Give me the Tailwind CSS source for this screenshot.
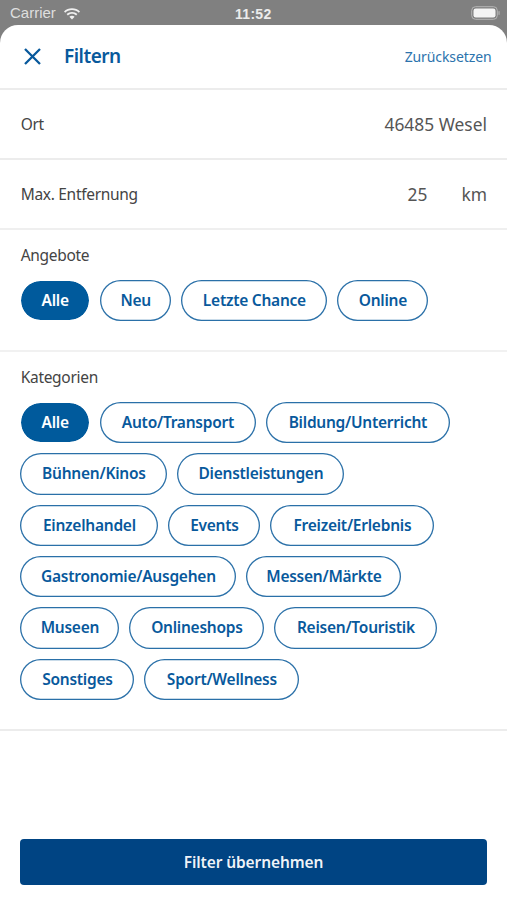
<!DOCTYPE html>
<html lang="de">
<head>
<meta charset="utf-8">
<script src="https://cdn.jsdelivr.net/npm/@tailwindcss/browser@4"></script>
</head>
<body class="m-0 bg-[#808080] font-['Noto_Sans',sans-serif]">
<div class="relative w-[507px] h-[900px] overflow-hidden flex flex-col">
  <div class="h-[25px] shrink-0 flex items-center justify-between pl-[10px] pr-[6px] font-['Liberation_Sans',sans-serif] relative">
    <div class="flex items-center gap-[7px] text-[15px] text-white/75 mt-[2px]"><span>Carrier</span>
      <svg width="18" height="14" viewBox="0 0 18 13" fill="#f0f0f0"><path d="M9 2.600c2.600 0 5 1 6.800 2.700l1.200-1.300C14.900 2 12.100.8 9 .8S3.100 2 1 4l1.200 1.300C4 3.600 6.400 2.600 9 2.600z"/><path d="M9 6.300c1.600 0 3 .6 4.100 1.600l1.300-1.300C13 5.200 11.100 4.500 9 4.500s-4 .7-5.400 2.100l1.300 1.300C6 6.900 7.400 6.300 9 6.300z"/><path d="M9 8.200c-1 0-1.900.4-2.600 1L9 12l2.600-2.800c-.7-.6-1.600-1-2.600-1z"/></svg>
    </div>
    <span class="absolute left-[235px] top-[4px] text-[14px] font-bold text-white/85 tracking-[0.3px]">11:52</span>
    <svg class="mt-[1px]" width="30" height="14" viewBox="0 0 30 14"><rect x="0.700" y="0.700" width="25.600" height="12.600" rx="3.800" fill="none" stroke="#b5b5b5" stroke-width="1"/><rect x="2.500" y="2.500" width="22" height="9" rx="2.300" fill="#f4f4f4"/><rect x="27.300" y="5" width="1.500" height="4" rx="0.700" fill="#a8a8a8"/></svg>
  </div>
  <div class="flex-1 bg-white rounded-t-[18px] flex flex-col">
    <div class="h-[65px] shrink-0 flex items-center justify-between pl-[23px] pr-[15.500px] border-b-[2px] border-[#ececec]">
      <div class="flex items-center gap-[22px]">
        <svg width="19" height="19" viewBox="0 0 19 19" fill="none" stroke="#08599c" stroke-width="2.300"><path d="M2 2l15 15M17 2L2 17"/></svg>
        <span class="text-[19px] font-semibold text-[#08599c] leading-none tracking-[-0.5px]">Filtern</span>
      </div>
      <span class="text-[14px] text-[#2c73ad] tracking-[-0.1px]">Zurücksetzen</span>
    </div>
    <div class="h-[70px] shrink-0 flex items-center justify-between pl-[20.670px] pr-[20px] border-b-[2px] border-[#ececec] text-[#444]">
      <span class="text-[15.500px] tracking-[-0.3px] mt-[2px]">Ort</span>
      <span class="text-[17.400px] text-[#555]">46485 Wesel</span>
    </div>
    <div class="h-[70px] shrink-0 flex items-center justify-between pl-[20.670px] pr-[20px] border-b-[2px] border-[#efefef] text-[#444]">
      <span class="text-[15.500px] tracking-[-0.3px] mt-[2px]">Max. Entfernung</span>
      <div class="flex gap-[34px] text-[17.400px] text-[#555]"><span>25</span><span>km</span></div>
    </div>
    <div class="h-[122px] shrink-0 border-b-[2px] border-[#f1f1f1] pl-[20.400px] pr-[20px] pt-[13px]">
      <div class="ml-[0.300px] text-[15.500px] tracking-[-0.3px] leading-[24px] text-[#444]">Angebote</div>
      <div class="mt-[13px] flex flex-wrap gap-x-[10px] gap-y-[10px] text-[15.500px] font-semibold tracking-[-0.25px] text-[#08599c]">
        <span class="h-[41.330px] w-[69.500px] rounded-full border border-white bg-clip-padding bg-[#005a9c] text-white flex items-center justify-center">Alle</span>
        <span class="h-[41.330px] w-[71.500px] rounded-full shadow-[inset_0_0_0_1.300px_#2a70a8] flex items-center justify-center">Neu</span>
        <span class="h-[41.330px] w-[146px] rounded-full shadow-[inset_0_0_0_1.300px_#2a70a8] flex items-center justify-center">Letzte Chance</span>
        <span class="h-[41.330px] w-[91px] rounded-full shadow-[inset_0_0_0_1.300px_#2a70a8] flex items-center justify-center">Online</span>
      </div>
    </div>
    <div class="h-[379px] shrink-0 border-b-[2px] border-[#ececec] pl-[20.400px] pr-[20px] pt-[13px]">
      <div class="ml-[0.300px] text-[15.500px] tracking-[-0.3px] leading-[24px] text-[#444]">Kategorien</div>
      <div class="mt-[13px] flex flex-wrap gap-x-[10px] gap-y-[10px] text-[15.500px] font-semibold tracking-[-0.25px] text-[#08599c]">
        <span class="h-[41.330px] w-[69.500px] rounded-full border border-white bg-clip-padding bg-[#005a9c] text-white flex items-center justify-center">Alle</span>
        <span class="h-[41.330px] w-[156px] rounded-full shadow-[inset_0_0_0_1.300px_#2a70a8] flex items-center justify-center">Auto/Transport</span>
        <span class="h-[41.330px] w-[184px] rounded-full shadow-[inset_0_0_0_1.300px_#2a70a8] flex items-center justify-center">Bildung/Unterricht</span>
        <span class="h-[41.330px] w-[147px] rounded-full shadow-[inset_0_0_0_1.300px_#2a70a8] flex items-center justify-center">Bühnen/Kinos</span>
        <span class="h-[41.330px] w-[167px] rounded-full shadow-[inset_0_0_0_1.300px_#2a70a8] flex items-center justify-center">Dienstleistungen</span>
        <span class="h-[41.330px] w-[138px] rounded-full shadow-[inset_0_0_0_1.300px_#2a70a8] flex items-center justify-center">Einzelhandel</span>
        <span class="h-[41.330px] w-[92px] rounded-full shadow-[inset_0_0_0_1.300px_#2a70a8] flex items-center justify-center">Events</span>
        <span class="h-[41.330px] w-[164px] rounded-full shadow-[inset_0_0_0_1.300px_#2a70a8] flex items-center justify-center">Freizeit/Erlebnis</span>
        <span class="h-[41.330px] w-[216px] rounded-full shadow-[inset_0_0_0_1.300px_#2a70a8] flex items-center justify-center">Gastronomie/Ausgehen</span>
        <span class="h-[41.330px] w-[155px] rounded-full shadow-[inset_0_0_0_1.300px_#2a70a8] flex items-center justify-center">Messen/Märkte</span>
        <span class="h-[41.330px] w-[99px] rounded-full shadow-[inset_0_0_0_1.300px_#2a70a8] flex items-center justify-center">Museen</span>
        <span class="h-[41.330px] w-[135px] rounded-full shadow-[inset_0_0_0_1.300px_#2a70a8] flex items-center justify-center">Onlineshops</span>
        <span class="h-[41.330px] w-[163px] rounded-full shadow-[inset_0_0_0_1.300px_#2a70a8] flex items-center justify-center">Reisen/Touristik</span>
        <span class="h-[41.330px] w-[114px] rounded-full shadow-[inset_0_0_0_1.300px_#2a70a8] flex items-center justify-center">Sonstiges</span>
        <span class="h-[41.330px] w-[155px] rounded-full shadow-[inset_0_0_0_1.300px_#2a70a8] flex items-center justify-center">Sport/Wellness</span>
      </div>
    </div>
    <div class="mt-[108px] ml-[20px] w-[467px] h-[46.400px] pt-[1px] rounded-[4px] bg-[#004483] text-white/95 flex items-center justify-center text-[15.500px] font-semibold tracking-[-0.1px]">Filter übernehmen</div>
  </div>
</div>
</body>
</html>
